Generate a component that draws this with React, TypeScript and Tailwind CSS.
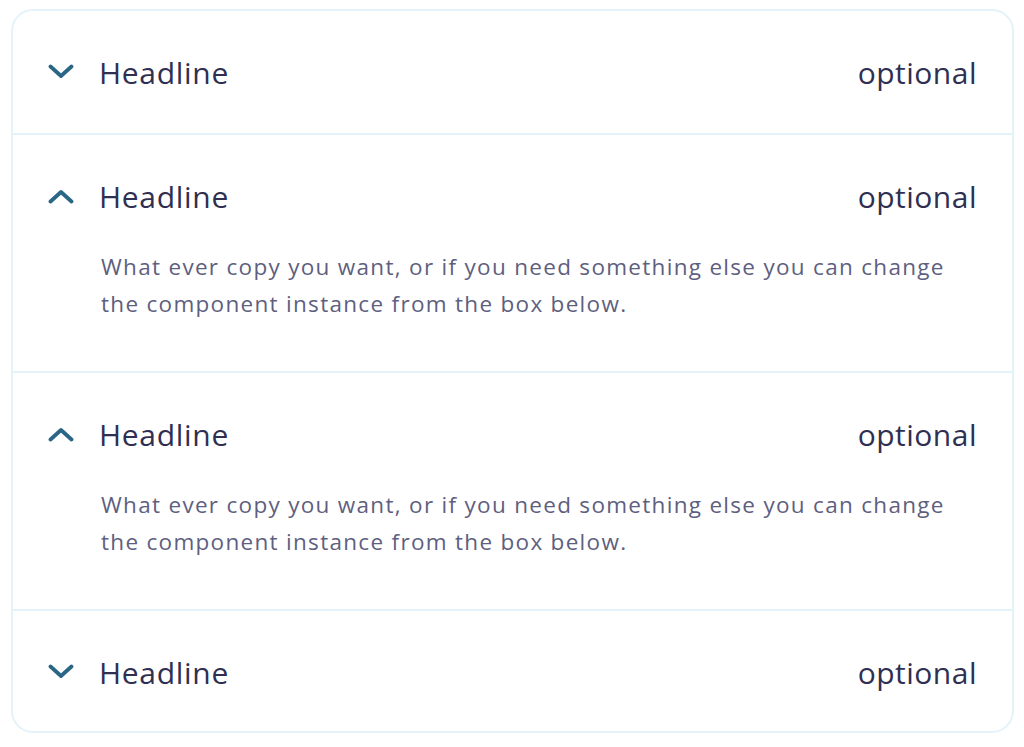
const items = [
  { open: false },
  { open: true },
  { open: true },
  { open: false },
];

const Chevron = ({ up }: { up: boolean }) => (
  <svg width="26" height="16" viewBox="0 0 26 16" className="shrink-0">
    <path
      d={up ? 'M2.5 13.5 L13 4 L23.5 13.5' : 'M2.5 2.5 L13 12 L23.5 2.5'}
      fill="none"
      stroke="#2a6787"
      strokeWidth="3.8"
      strokeLinecap="round"
      strokeLinejoin="round"
    />
  </svg>
);

const App = () => {
  return (
    <div className="w-[1024px] h-[747px] bg-white pt-[9px] pl-[11px]" style={{ fontFamily: '"Open Sans", Lato, sans-serif' }}>
      <div className="w-[1003px] border-2 border-[#e4f2fa] rounded-[22px] overflow-hidden">
        {items.map((item, i) => (
          <div
            key={i}
            className={`${i > 0 ? 'border-t-2 border-[#e4f2fa]' : ''} ${item.open ? 'h-[238px]' : 'h-[122px]'} px-[35px]`}
          >
            <div className="flex items-center h-[122px]">
              <Chevron up={item.open} />
              <span className="ml-[25px] text-[30px] tracking-[0.7px] text-[#2f2f52]">Headline</span>
              <span className="ml-auto text-[30px] tracking-[0.5px] text-[#2f2f52]">optional</span>
            </div>
            {item.open && (
              <p className="-mt-[9px] pl-[53px] pr-[20px] text-[22.5px] tracking-[1.3px] leading-[37px] text-[#5e5f7f]">
                What ever copy you want, or if you need something else you can change the component instance from the box below.
              </p>
            )}
          </div>
        ))}
      </div>
    </div>
  );
};

export default App;
